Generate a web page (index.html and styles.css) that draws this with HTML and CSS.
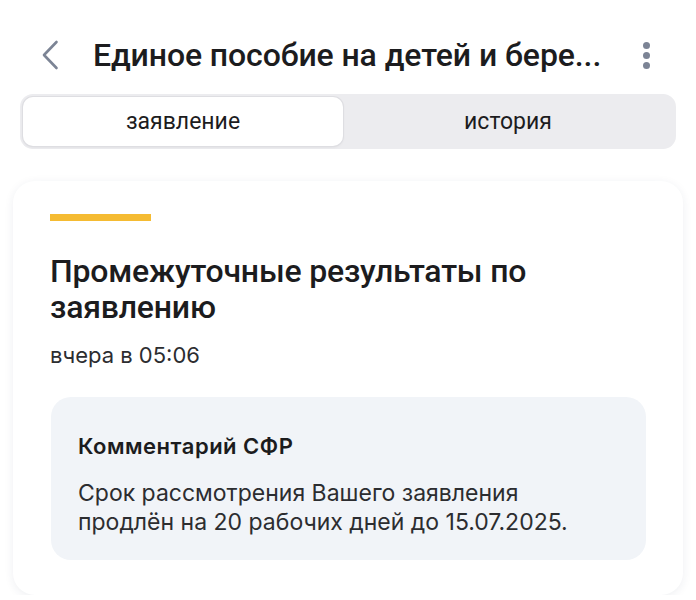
FILE: index.html
```html
<!DOCTYPE html>
<html lang="ru">
<head>
    <meta charset="UTF-8">
    <meta name="viewport" content="width=device-width, initial-scale=1.0">
    <title>Единое пособие</title>
    <link rel="stylesheet" href="styles.css">
</head>
<body>
    <!-- Top bar -->
    <div class="topbar">
        <button class="back" aria-label="Назад">
            <svg width="18" height="30" viewBox="0 0 18 30">
                <path d="M15.5 2 L3 15 L15.5 28" fill="none" stroke="#7c8495" stroke-width="2.6" stroke-linecap="round" stroke-linejoin="round"/>
            </svg>
        </button>
        <h1 class="title">Единое пособие на детей и бере...</h1>
        <button class="more" aria-label="Ещё">
            <span class="dot"></span>
            <span class="dot"></span>
            <span class="dot"></span>
        </button>
    </div>

    <!-- Tabs -->
    <div class="tabs">
        <div class="tab active">заявление</div>
        <div class="tab">история</div>
    </div>

    <!-- Status card -->
    <div class="card">
        <div class="accent"></div>
        <h2 class="card-title">Промежуточные результаты по заявлению</h2>
        <div class="date">вчера в 05:06</div>

        <div class="comment">
            <div class="comment-title">Комментарий СФР</div>
            <p class="comment-text">Срок рассмотрения Вашего заявления продлён на 20 рабочих дней до 15.07.2025.</p>
        </div>
    </div>
</body>
</html>
```

FILE: styles.css
```css
body {
    margin: 0;
    background: #ffffff;
    font-family: Roboto, "Noto Sans", sans-serif;
    color: #1c1c1e;
    overflow: hidden;
}
button {
    background: none;
    border: none;
    padding: 0;
    cursor: pointer;
}
.topbar {
    display: flex;
    align-items: center;
    height: 50px;
    margin-top: 30px;
    padding: 0 46px 0 41px;
}
.back {
    display: flex;
    width: 52px;
}
.title {
    flex: 1;
    margin: 0;
    font-size: 32px;
    font-weight: 500;
    letter-spacing: -0.1px;
    white-space: nowrap;
}
.more {
    display: flex;
    flex-direction: column;
    gap: 3px;
}
.dot {
    width: 7px;
    height: 7px;
    border-radius: 50%;
    background: #7c8495;
}
.tabs {
    display: flex;
    margin: 14px 20px 0 20px;
    height: 55px;
    padding: 3px;
    box-sizing: border-box;
    background: #ececef;
    border-radius: 13px;
}
.tab {
    flex: 1;
    display: flex;
    align-items: center;
    justify-content: center;
    font-size: 23px;
    font-weight: 400;
    color: #1c1c1e;
    border-radius: 10px;
}
.tab.active {
    flex: 0 0 320px;
    background: #ffffff;
    box-shadow: 0 0 0 1px #dedee2, 0 1px 3px rgba(0, 0, 0, 0.08);
}
.card {
    margin: 32px 13px 0 13px;
    padding: 33px 37px 35px 37px;
    background: #ffffff;
    border-radius: 22px;
    box-shadow: 0 2px 10px rgba(40, 50, 90, 0.08);
}
.accent {
    width: 101px;
    height: 7px;
    background: #f5bb32;
}
.card-title {
    margin: 32px 0 0 0;
    max-width: 540px;
    font-size: 32px;
    font-weight: 500;
    line-height: 36px;
    letter-spacing: -0.2px;
}
.date {
    margin-top: 16px;
    font-family: Inter, sans-serif;
    font-size: 22px;
    line-height: 28px;
    color: #2c2d30;
}
.comment {
    margin: 28px 0 0 1px;
    padding: 36px 27px 23px 27px;
    background: #f1f4f8;
    border-radius: 20px;
}
.comment-title {
    font-family: Inter, sans-serif;
    font-size: 22px;
    font-weight: 600;
    line-height: 26px;
    letter-spacing: 0.5px;
}
.comment-text {
    margin: 20px 0 0 0;
    max-width: 520px;
    font-family: Inter, sans-serif;
    font-size: 23px;
    line-height: 29px;
    color: #2c2d30;
}
```
